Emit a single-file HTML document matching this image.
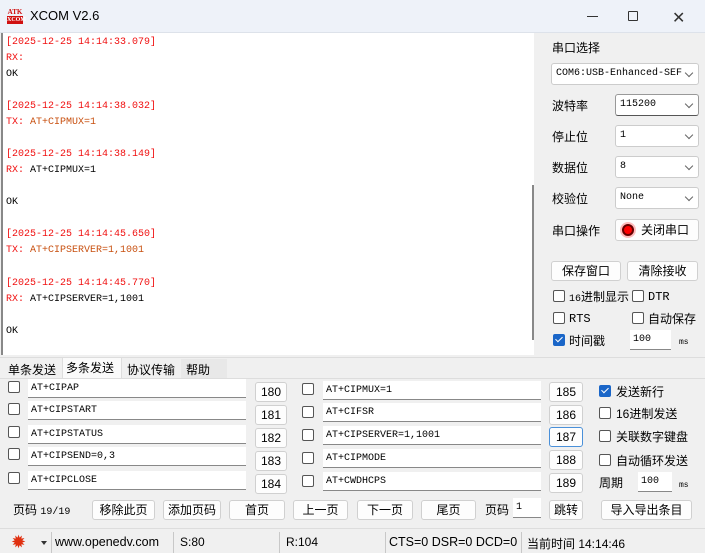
<!DOCTYPE html>
<html><head><meta charset="utf-8"><style>
*{box-sizing:border-box;margin:0;padding:0}
body{width:705px;height:553px;overflow:hidden;background:#f0f0f0;font-family:"Liberation Sans","Noto Sans CJK SC",sans-serif;font-size:12px;color:#000;position:relative}
.a{position:absolute}
.mono{font-family:"Liberation Mono","Noto Sans CJK SC",monospace;font-size:10px}
#title{left:0;top:0;width:705px;height:33px;background:#eef2f9;border-bottom:1px solid #dde2ea}
#rx{left:1px;top:33px;width:533px;height:322px;background:#fff;border-left:2px solid #888}
.ln{position:absolute;left:3px;height:16px;line-height:16px;white-space:pre}
.r{color:#f01010}.o{color:#c85010}
.cb{position:absolute;width:12px;height:12px;border:1px solid #555;border-radius:2px;background:#fff}
.cbc{background:#1a66c8;border-color:#1a66c8}
.cbc:after{content:"";position:absolute;left:3px;top:0px;width:3px;height:6px;border:solid #fff;border-width:0 1.5px 1.5px 0;transform:rotate(45deg)}
.in{position:absolute;background:#fff;border-bottom:1px solid #888;height:19px;line-height:19px;padding-left:3px;white-space:nowrap;overflow:hidden}
.bt{position:absolute;background:#fdfdfd;border:1px solid #d0d0d0;border-radius:3px;text-align:center;font-size:12px;line-height:18px;height:20px}
.cmb{position:absolute;background:#fff;border:1px solid #ccc;border-radius:3px;height:22px;line-height:20px;padding-left:4px}
.cmb:after{content:"";position:absolute;right:6px;top:6px;width:5px;height:5px;border:solid #666;border-width:0 1px 1px 0;transform:rotate(45deg)}
.lb{position:absolute;font-size:12px}
.sep{position:absolute;top:532px;width:1px;height:21px;background:#c8c8c8}
</style></head><body>
<div id="title" class="a">
 <div class="a" style="left:7px;top:8px;width:16px;font:bold 7px 'Liberation Serif',serif;color:#d01010;line-height:8px;text-align:center">ATK<br><span style="background:#d01010;color:#fff;display:block;font-size:6px">XCOM</span></div>
 <div class="a" style="left:30px;top:8px;font-size:13px">XCOM V2.6</div>
 <div class="a" style="left:587px;top:16px;width:11px;height:1px;background:#333"></div>
 <div class="a" style="left:628px;top:11px;width:10px;height:10px;border:1px solid #333;border-radius:1px"></div>
 <div class="a" style="left:672px;top:8px;font-size:16px;color:#333">✕</div>
</div>
<div id="rx" class="a mono">
 <div class="ln r" style="top:2px">[2025-12-25 14:14:33.079]</div>
 <div class="ln r" style="top:18px">RX:</div>
 <div class="ln" style="top:34px">OK</div>
 <div class="ln r" style="top:66px">[2025-12-25 14:14:38.032]</div>
 <div class="ln o" style="top:82px"><span class="r">TX:</span> AT+CIPMUX=1</div>
 <div class="ln r" style="top:114px">[2025-12-25 14:14:38.149]</div>
 <div class="ln" style="top:130px"><span class="r">RX:</span> AT+CIPMUX=1</div>
 <div class="ln" style="top:162px">OK</div>
 <div class="ln r" style="top:194px">[2025-12-25 14:14:45.650]</div>
 <div class="ln o" style="top:210px"><span class="r">TX:</span> AT+CIPSERVER=1,1001</div>
 <div class="ln r" style="top:243px">[2025-12-25 14:14:45.770]</div>
 <div class="ln" style="top:259px"><span class="r">RX:</span> AT+CIPSERVER=1,1001</div>
 <div class="ln" style="top:291px">OK</div>
 <div class="a" style="left:529px;top:152px;width:2px;height:155px;background:#888"></div>
</div>
<!-- right panel -->
<div class="lb" style="left:552px;top:39px">串口选择</div>
<div class="cmb mono" style="left:551px;top:63px;width:148px">COM6:USB-Enhanced-SEF</div>
<div class="lb" style="left:552px;top:97px">波特率</div>
<div class="cmb mono" style="left:615px;top:94px;width:84px;border-color:#999;border-bottom:1px solid #555">115200</div>
<div class="lb" style="left:552px;top:128px">停止位</div>
<div class="cmb mono" style="left:615px;top:125px;width:84px">1</div>
<div class="lb" style="left:552px;top:159px">数据位</div>
<div class="cmb mono" style="left:615px;top:156px;width:84px">8</div>
<div class="lb" style="left:552px;top:190px">校验位</div>
<div class="cmb mono" style="left:615px;top:187px;width:84px">None</div>
<div class="lb" style="left:552px;top:222px">串口操作</div>
<div class="bt" style="left:615px;top:219px;width:84px;height:22px;line-height:20px;padding-left:16px">关闭串口</div>
<div class="a" style="left:622px;top:224px;width:12px;height:12px;border-radius:50%;background:#f00;border:2px solid #600;box-shadow:0 0 0 2px #fbb"></div>
<div class="bt" style="left:551px;top:261px;width:70px">保存窗口</div>
<div class="bt" style="left:627px;top:261px;width:71px">清除接收</div>
<div class="cb" style="left:553px;top:290px"></div><div class="lb" style="left:569px;top:288px"><span class="mono">16</span>进制显示</div>
<div class="cb" style="left:632px;top:290px"></div><div class="lb mono" style="left:648px;top:290px">DTR</div>
<div class="cb" style="left:553px;top:312px"></div><div class="lb mono" style="left:569px;top:312px">RTS</div>
<div class="cb" style="left:632px;top:312px"></div><div class="lb" style="left:648px;top:310px">自动保存</div>
<div class="cb cbc" style="left:553px;top:334px"></div><div class="lb" style="left:569px;top:332px">时间戳</div>
<div class="in mono" style="left:630px;top:330px;width:41px;height:20px">100</div>
<div class="lb mono" style="left:679px;top:338px;font-size:8px">ms</div>
<!-- tabs -->
<div class="a" style="left:0;top:357px;width:705px;height:1px;background:#ddd"></div>
<div class="lb" style="left:8px;top:361px">单条发送</div>
<div class="a" style="left:62px;top:357px;width:60px;height:21px;background:#fafafa;border:1px solid #ddd;border-bottom:none"></div>
<div class="lb" style="left:66px;top:359px">多条发送</div>
<div class="lb" style="left:127px;top:361px">协议传输</div>
<div class="a" style="left:181px;top:359px;width:46px;height:19px;background:#e8e8e8"></div>
<div class="lb" style="left:186px;top:361px">帮助</div>
<div class="a" style="left:0;top:378px;width:705px;height:1px;background:#ddd"></div>
<!-- rows -->
<div class="cb" style="left:8px;top:381px"></div><div class="in mono" style="left:28px;top:379px;width:218px">AT+CIPAP</div><div class="bt" style="left:255px;top:382px;width:32px">180</div>
<div class="cb" style="left:8px;top:403px"></div><div class="in mono" style="left:28px;top:401px;width:218px">AT+CIPSTART</div><div class="bt" style="left:255px;top:405px;width:32px">181</div>
<div class="cb" style="left:8px;top:426px"></div><div class="in mono" style="left:28px;top:425px;width:218px">AT+CIPSTATUS</div><div class="bt" style="left:255px;top:428px;width:32px">182</div>
<div class="cb" style="left:8px;top:448px"></div><div class="in mono" style="left:28px;top:447px;width:218px">AT+CIPSEND=0,3</div><div class="bt" style="left:255px;top:451px;width:32px">183</div>
<div class="cb" style="left:8px;top:472px"></div><div class="in mono" style="left:28px;top:471px;width:218px">AT+CIPCLOSE</div><div class="bt" style="left:255px;top:474px;width:32px">184</div>
<div class="cb" style="left:302px;top:383px"></div><div class="in mono" style="left:323px;top:381px;width:218px">AT+CIPMUX=1</div><div class="bt" style="left:549px;top:382px;width:34px">185</div>
<div class="cb" style="left:302px;top:406px"></div><div class="in mono" style="left:323px;top:403px;width:218px">AT+CIFSR</div><div class="bt" style="left:549px;top:405px;width:34px">186</div>
<div class="cb" style="left:302px;top:429px"></div><div class="in mono" style="left:323px;top:426px;width:218px">AT+CIPSERVER=1,1001</div><div class="bt" style="left:549px;top:427px;width:34px;border-color:#4a90d9">187</div>
<div class="cb" style="left:302px;top:452px"></div><div class="in mono" style="left:323px;top:449px;width:218px">AT+CIPMODE</div><div class="bt" style="left:549px;top:450px;width:34px">188</div>
<div class="cb" style="left:302px;top:475px"></div><div class="in mono" style="left:323px;top:472px;width:218px">AT+CWDHCPS</div><div class="bt" style="left:549px;top:473px;width:34px">189</div>
<div class="cb cbc" style="left:599px;top:385px"></div><div class="lb" style="left:616px;top:383px">发送新行</div>
<div class="cb" style="left:599px;top:407px"></div><div class="lb" style="left:616px;top:405px">16进制发送</div>
<div class="cb" style="left:599px;top:430px"></div><div class="lb" style="left:616px;top:428px">关联数字键盘</div>
<div class="cb" style="left:599px;top:454px"></div><div class="lb" style="left:616px;top:452px">自动循环发送</div>
<div class="lb" style="left:599px;top:474px">周期</div>
<div class="in mono" style="left:638px;top:472px;width:34px;height:20px">100</div>
<div class="lb mono" style="left:679px;top:481px;font-size:8px">ms</div>
<!-- page row -->
<div class="lb" style="left:13px;top:501px">页码 <span class="mono">19/19</span></div>
<div class="bt" style="left:92px;top:500px;width:63px">移除此页</div>
<div class="bt" style="left:163px;top:500px;width:58px">添加页码</div>
<div class="bt" style="left:229px;top:500px;width:56px">首页</div>
<div class="bt" style="left:293px;top:500px;width:55px">上一页</div>
<div class="bt" style="left:357px;top:500px;width:56px">下一页</div>
<div class="bt" style="left:421px;top:500px;width:55px">尾页</div>
<div class="lb" style="left:485px;top:501px">页码</div>
<div class="in mono" style="left:513px;top:498px;width:28px;height:20px">1</div>
<div class="bt" style="left:549px;top:500px;width:34px">跳转</div>
<div class="bt" style="left:601px;top:500px;width:91px">导入导出条目</div>
<!-- status -->
<div class="a" style="left:0;top:528px;width:705px;height:1px;background:#ddd"></div>
<div class="a" style="left:11px;top:532px;color:#e03010;font-size:18px;line-height:20px">✹</div>
<div class="a" style="left:41px;top:541px;border:3px solid transparent;border-top:4px solid #333"></div>
<div class="sep" style="left:51px"></div>
<div class="lb" style="left:55px;top:535px;font-size:12.5px">www.openedv.com</div>
<div class="sep" style="left:173px"></div>
<div class="lb" style="left:180px;top:535px">S:80</div>
<div class="sep" style="left:279px"></div>
<div class="lb" style="left:286px;top:535px">R:104</div>
<div class="sep" style="left:385px"></div>
<div class="lb" style="left:389px;top:535px;font-size:12.5px">CTS=0 DSR=0 DCD=0</div>
<div class="sep" style="left:521px"></div>
<div class="lb" style="left:527px;top:535px">当前时间 14:14:46</div>
</body></html>
